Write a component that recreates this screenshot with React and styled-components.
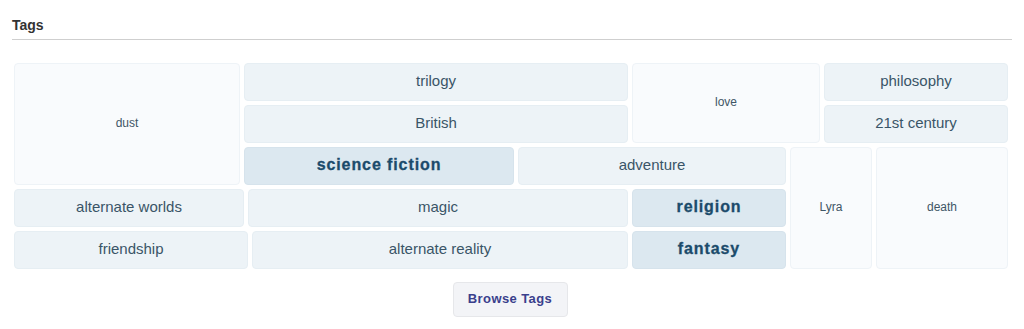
import React from "react";
import styled, { createGlobalStyle, css } from "styled-components";

const Global = createGlobalStyle`
  html, body { margin: 0; padding: 0; background: #fff; }
  body { font-family: "Liberation Sans", Arial, sans-serif; }
`;

const Section = styled.section`
  padding: 17px 12px 0 12px;
`;

const Title = styled.h2`
  margin: 0;
  padding: 0 0 6px 0;
  font-size: 14px;
  font-weight: bold;
  color: #333;
  border-bottom: 1px solid #cfcfcf;
  line-height: 16px;
`;

const Cloud = styled.div`
  display: grid;
  margin: 23px 0 0 2px;
  width: 994px;
  grid-template-columns: 226px 0 0 262px 110px 154px 30px 48px 132px;
  grid-template-rows: repeat(5, 38px);
  gap: 4px;
`;

const levels = {
  1: css`
    background: #f9fbfd;
    border-color: #eef3f7;
    font-size: 12px;
    color: #3f5666;
  `,
  2: css`
    background: #edf3f7;
    border-color: #e6eef3;
    font-size: 15px;
    color: #3a5567;
  `,
  3: css`
    background: #dce8f0;
    border-color: #d6e3ec;
    font-size: 16px;
    font-weight: bold;
    letter-spacing: 0.9px;
    color: #1b4b6b;
    -webkit-text-stroke: 0.3px #1b4b6b;
  `,
};

const Tile = styled.a`
  display: flex;
  align-items: center;
  justify-content: center;
  box-sizing: border-box;
  padding-bottom: 3px;
  border: 1px solid transparent;
  border-radius: 4px;
  text-decoration: none;
  white-space: nowrap;
  grid-column: ${(p) => p.$col};
  grid-row: ${(p) => p.$row};
  ${(p) => levels[p.$level]}
`;

const Footer = styled.div`
  display: flex;
  justify-content: center;
  padding-top: 13px;
`;

const BrowseButton = styled.button`
  width: 115px;
  height: 35px;
  box-sizing: border-box;
  background: #f3f4f7;
  border: 1px solid #e6e7ea;
  border-radius: 4px;
  font-family: "Liberation Sans", Arial, sans-serif;
  font-weight: bold;
  font-size: 13px;
  letter-spacing: 0.4px;
  color: #3a3f8c;
  padding: 0 0 2px 0;
  margin-right: 4px;
`;

const tags = [
  { name: "dust", level: 1, col: "1 / 2", row: "1 / 4" },
  { name: "trilogy", level: 2, col: "2 / 6", row: "1 / 2" },
  { name: "love", level: 1, col: "6 / 8", row: "1 / 3" },
  { name: "philosophy", level: 2, col: "8 / 10", row: "1 / 2" },
  { name: "British", level: 2, col: "2 / 6", row: "2 / 3" },
  { name: "21st century", level: 2, col: "8 / 10", row: "2 / 3" },
  { name: "science fiction", level: 3, col: "2 / 5", row: "3 / 4" },
  { name: "adventure", level: 2, col: "5 / 7", row: "3 / 4" },
  { name: "Lyra", level: 1, col: "7 / 9", row: "3 / 6" },
  { name: "death", level: 1, col: "9 / 10", row: "3 / 6" },
  { name: "alternate worlds", level: 2, col: "1 / 3", row: "4 / 5" },
  { name: "magic", level: 2, col: "3 / 6", row: "4 / 5" },
  { name: "religion", level: 3, col: "6 / 7", row: "4 / 5" },
  { name: "friendship", level: 2, col: "1 / 4", row: "5 / 6" },
  { name: "alternate reality", level: 2, col: "4 / 6", row: "5 / 6" },
  { name: "fantasy", level: 3, col: "6 / 7", row: "5 / 6" },
];

export default function App() {
  return (
    <>
      <Global />
      <Section>
        <Title>Tags</Title>
        <Cloud>
          {tags.map((t) => (
            <Tile key={t.name} href="#" $level={t.level} $col={t.col} $row={t.row}>
              {t.name}
            </Tile>
          ))}
        </Cloud>
        <Footer>
          <BrowseButton>Browse Tags</BrowseButton>
        </Footer>
      </Section>
    </>
  );
}
